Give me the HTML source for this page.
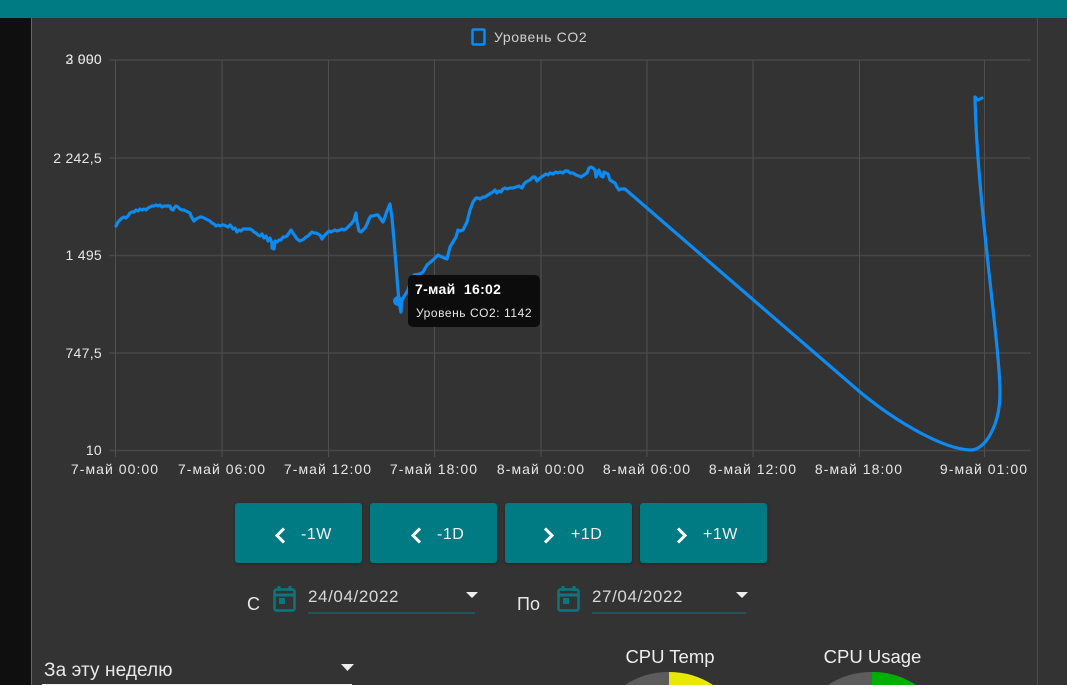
<!DOCTYPE html>
<html lang="ru"><head><meta charset="utf-8"><title>CO2</title>
<style>
html,body{margin:0;padding:0;background:#333;width:1067px;height:685px;overflow:hidden}
body{position:relative;font-family:"Liberation Sans",sans-serif;color:#e8e8e8}
.a{position:absolute;display:block}
.btn{position:absolute;top:503px;width:127px;height:60px;background:#007b83;border-radius:3px;box-shadow:0 1px 3px rgba(0,0,0,.35);color:#f2f2f2;font-size:16px;letter-spacing:.5px}
.btn svg{position:absolute;left:0;top:0}
.btn span{position:absolute;top:22px;line-height:20px;white-space:nowrap}
svg text{font-family:"Liberation Sans",sans-serif}
</style></head><body>
<div class="a" style="left:0;top:18px;width:31px;height:667px;background:#0f0f0f"></div>
<div class="a" style="left:31px;top:18px;width:1px;height:667px;background:#666"></div>
<div class="a" style="left:1037px;top:18px;width:1px;height:667px;background:#4d4d4d"></div>
<div class="a" style="left:0;top:0;width:1067px;height:18px;background:#007b83"></div>

<svg class="a" style="left:0;top:0" width="1067" height="490" viewBox="0 0 1067 490">
<g stroke="#474747" stroke-width="1.5" fill="none">
<path d="M109 60H1031M109 158H1031M109 255.500H1031M109 353H1031M109 450.500H1031"/>
<path d="M115.500 60V457M222 60V457M328.500 60V457M434.500 60V457M541 60V457M647 60V457M753 60V457M859.500 60V457M984.500 60V457" stroke-width="1" stroke="#505050"/>
</g>
<rect x="472.500" y="29.500" width="12" height="15" rx="1" fill="#0d3a5c" fill-opacity=".4" stroke="#0d8bf0" stroke-width="2.500"/>
<text x="494" y="42" font-size="14" fill="#cfcfcf" letter-spacing=".6">Уровень CO2</text>
<g font-size="14" fill="#e6e6e6" text-anchor="end" letter-spacing=".3">
<text x="102" y="64">3 000</text><text x="102" y="64" opacity=".7">2 990</text>
<text x="102" y="163">2 242,5</text><text x="102" y="260">1 495</text><text x="102" y="358">747,5</text><text x="102" y="455">10</text>
</g>
<g font-size="14" fill="#e6e6e6" text-anchor="middle" letter-spacing="1.05">
<text x="115" y="474">7-май 00:00</text><text x="222" y="474">7-май 06:00</text><text x="328" y="474">7-май 12:00</text><text x="434" y="474">7-май 18:00</text><text x="541" y="474">8-май 00:00</text><text x="647" y="474">8-май 06:00</text><text x="753" y="474">8-май 12:00</text><text x="859" y="474">8-май 18:00</text><text x="984" y="474">9-май 01:00</text>
</g>
<path fill="none" stroke="#0d8bf0" stroke-width="3.200" stroke-linejoin="round" stroke-linecap="round" d="M116 226L118 222 120 220 122 218 124 217 126 218 128 216 130 213 132 212 134 212 136 210 138 211 140 209 142 210 144 209 146 210 148 208 150 207 152 206 154 206 156 205 158 206 160 205 162 207 164 206 166 206 168 206 170 206 171 209 173 210 174 208 176 206 178 207 180 209 182 210 184 210 186 211 188 212 190 213 191 216 194 221 196 219 198 218 200 217 202 217 204 218 206 219 208 220 210 221 212 223 214 224 216 226 218 225 220 226 222 225 224 225 226 226 228 227 230 225 231 226 233 229 235 228 237 232 239 230 241 231 243 229 245 229 248 229 250 229 252 230 254 232 256 233 258 235 260 236 262 234 264 238 266 236 268 241 270 238 272 243 272 248 274 249 275 241 277 242 279 240 281 240 283 237 285 237 287 236 289 233 291 230 293 233 295 236 297 239 300 241 302 240 304 239 306 237 308 236 310 234 312 232 314 233 316 233 318 234 320 235 322 239 324 236 326 234 329 231 331 232 333 231 335 230 337 231 340 230 342 229 344 230 346 229 348 227 350 225 352 223 354 220 356 213 357 222 359 231 361 232 363 230 365 228 367 224 369 219 371 216 373 216 376 215 378 215 380 218 383 222 385 217 387 211 390 204 392 218 394 240 396 265 398 290 399 302 401 312 402 300 405 295 408 290 411 280 414 275 420 274 423 272 427 265 433 260 438 255 442 257 447 259 450 247 453 242 456 237 458 230 460 231 463 230 465 226 467 222 470 210 473 202 476 198 478 198 480 199 483 197 485 197 488 195 491 193 493 192 495 190 497 193 499 191 501 192 503 189 505 188 507 189 510 188 513 188 516 187 519 186 522 188 524 184 526 182 528 181 530 180 533 177 535 177 537 181 540 178 543 176 546 174 548 175 550 173 553 174 556 172 558 173 560 172 563 173 565 171 568 171 570 173 573 173 576 175 579 176 581 177 584 175 587 173 589 168 591 167 593 168 595 170 596 177 598 172 599 170 601 176 603 177 604 172 606 173 608 174 610 180 613 182 615 183 617 187 619 190 621 189 625 189 L860 392C900 425 945 449 970 450C985 451 1000 425 1000 393C1000 345 977 200 975 97L978 100 982 98"/>
<circle cx="398" cy="301" r="5" fill="#0d8bf0"/>
<rect x="408" y="275" width="132" height="52" rx="5" fill="#0a0a0a" fill-opacity=".96"/>
<text x="415" y="294" font-size="14" font-weight="700" fill="#fff" letter-spacing=".3" xml:space="preserve">7-май  16:02</text>
<text x="416" y="317" font-size="12" fill="#e6e6e6" letter-spacing=".55">Уровень CO2: 1142</text>
</svg>

<div class="btn" style="left:235px"><svg width="127" height="60"><path d="M49 25.500L42 32.500 49 39.500" fill="none" stroke="#fff" stroke-width="3"/></svg><span style="left:66px">-1W</span></div>
<div class="btn" style="left:370px"><svg width="127" height="60"><path d="M50 25.500L43 32.500 50 39.500" fill="none" stroke="#fff" stroke-width="3"/></svg><span style="left:67px">-1D</span></div>
<div class="btn" style="left:505px"><svg width="127" height="60"><path d="M40 25.500L47 32.500 40 39.500" fill="none" stroke="#fff" stroke-width="3"/></svg><span style="left:66px">+1D</span></div>
<div class="btn" style="left:640px"><svg width="127" height="60"><path d="M38 25.500L45 32.500 38 39.500" fill="none" stroke="#fff" stroke-width="3"/></svg><span style="left:63px">+1W</span></div>

<svg class="a" style="left:0;top:575px" width="1067" height="50" viewBox="0 575 1067 50">
<text x="247" y="610" font-size="18" fill="#e8e8e8">С</text>
<text x="517" y="610" font-size="18" fill="#e8e8e8">По</text>
<g fill="none" stroke="#0a7680" stroke-width="2.500">
<rect x="274.500" y="589.500" width="20" height="21" rx="2"/><path d="M274 595H295M279 586V591M290 586V591" stroke-width="3"/>
<rect x="558.500" y="589.500" width="20" height="21" rx="2"/><path d="M558 595H579M563 586V591M574 586V591" stroke-width="3"/>
</g>
<rect x="279" y="598" width="6" height="6" fill="#0a7680"/><rect x="563" y="598" width="6" height="6" fill="#0a7680"/>
<text x="308" y="602" font-size="17" fill="#d8d8d8" letter-spacing=".6">24/04/2022</text>
<text x="592" y="602" font-size="17" fill="#d8d8d8" letter-spacing=".6">27/04/2022</text>
<path d="M466 592H478L472 598Z M736 592H748L742 598Z" fill="#eee"/>
<path d="M308 613H475M592 613H746" stroke="#0a7680" stroke-width="1"/>
</svg>

<svg class="a" style="left:0;top:630px" width="1067" height="55" viewBox="0 630 1067 55">
<text x="44" y="676" font-size="19" fill="#e8e8e8" letter-spacing=".1">За эту неделю</text>
<path d="M341 664H354L347.500 671Z" fill="#eee"/>
<rect x="42" y="684" width="310" height="1" fill="#eee"/>
<text x="670" y="663" font-size="18.500" fill="#eee" text-anchor="middle">CPU Temp</text>
<text x="872.500" y="663" font-size="18.500" fill="#eee" text-anchor="middle">CPU Usage</text>
<path d="M625 685A80 80 0 0 1 713 685Z" fill="#5c5c5c"/>
<path d="M669 685V672A80 80 0 0 1 713 685Z" fill="#e8e800"/>
<path d="M828 685A80 80 0 0 1 916 685Z" fill="#5c5c5c"/>
<path d="M872 685V672A80 80 0 0 1 916 685Z" fill="#00b000"/>
</svg>
</body></html>
